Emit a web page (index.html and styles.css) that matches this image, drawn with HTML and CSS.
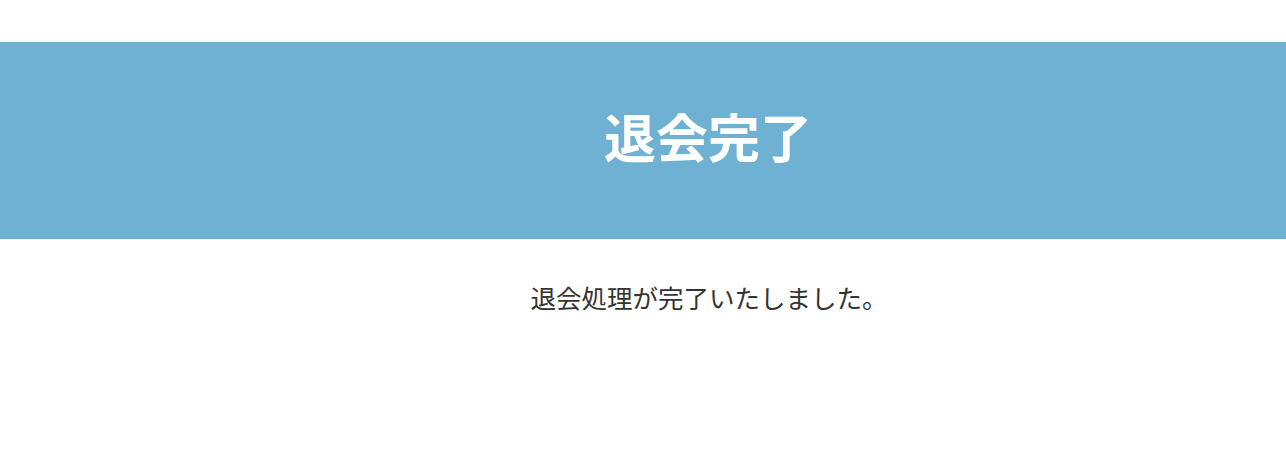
FILE: index.html
```html
<!DOCTYPE html>
<html lang="ja">
<head>
<meta charset="utf-8">
<title>退会完了</title>
<link rel="stylesheet" href="styles.css">
</head>
<body>
<div class="page">
  <header class="hero">
    <h1 class="hero-title">退会完了</h1>
  </header>
  <main class="content">
    <p class="message">退会処理が完了いたしました。</p>
  </main>
</div>
</body>
</html>
```

FILE: styles.css
```css
html, body {
  margin: 0;
  padding: 0;
  background: #ffffff;
}

body {
  font-family: "Noto Sans CJK JP", "Noto Sans", sans-serif;
  color: #333333;
}

.page {
  padding-top: 42px;
}

.hero {
  height: 197px;
  box-sizing: border-box;
  background: #6eb1d3;
  display: flex;
  align-items: center;
  justify-content: center;
  padding-left: 130px;
  padding-bottom: 10px;
}

.hero-title {
  margin: 0;
  color: #ffffff;
  font-size: 52px;
  font-weight: 700;
  line-height: 1;
}

.content {
  padding-left: 132px;
  padding-top: 43px;
  text-align: center;
}

.message {
  margin: 0;
  font-size: 25.5px;
  line-height: 30px;
}
```
